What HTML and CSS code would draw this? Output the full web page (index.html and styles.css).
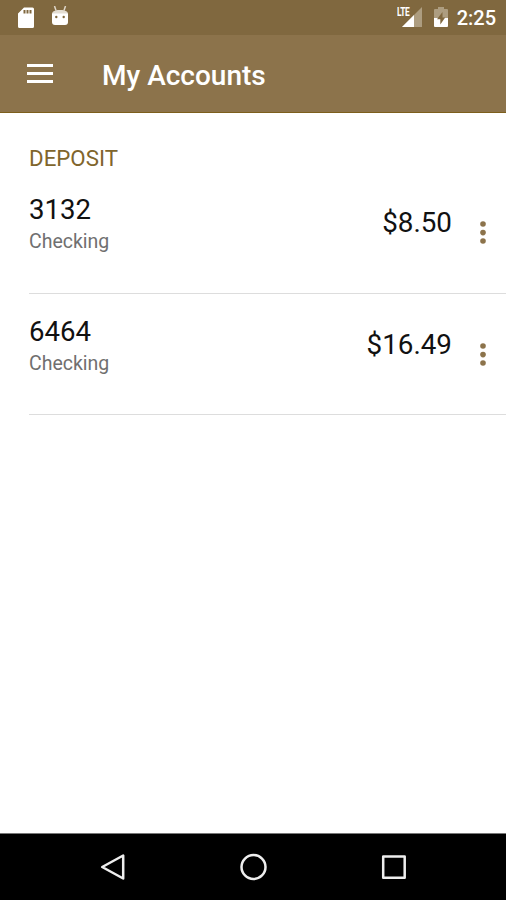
FILE: index.html
```html
<!DOCTYPE html>
<html lang="en">
<head>
	<meta charset="utf-8">
	<title>My Accounts</title>
	<link rel="stylesheet" href="styles.css">
</head>
<body>
	<div class="status-bar">
		<svg class="sd-icon" width="16" height="21" viewBox="0 0 16 21">
			<path fill="#fff" fill-rule="evenodd" d="M6 .500h8.500a1.500 1.500 0 0 1 1.500 1.500v17.500a1.500 1.500 0 0 1-1.500 1.500h-13A1.500 1.500 0 0 1 0 19.500V6.500zM5.500 3v3.500h2V3zm3 0v3.500h2V3zm3 0v3.500h2V3z"/>
		</svg>
		<svg class="android-icon" width="18" height="20" viewBox="0 0 18 20">
			<path stroke="#ded6c8" stroke-width="1.500" d="M3.500 0l1.500 4.500M14.500 0l-1.500 4.500"/>
			<path fill="#e3ddd2" d="M1 8.500C1 5.500 3 4 9 4s8 1.500 8 4.500z"/>
			<path fill="#fff" d="M1 7.500h16V16a3 3 0 0 1-3 3H4a3 3 0 0 1-3-3z"/>
			<circle cx="5.300" cy="11" r="1.200" fill="#80683f"/>
			<circle cx="12.700" cy="11" r="1.200" fill="#80683f"/>
		</svg>
		<div class="status-right">
			<div class="signal">
				<span class="lte">LTE</span>
				<svg width="20" height="20" viewBox="0 0 20 20">
					<path fill="#ad9d80" d="M20 0v20H0z"/>
					<path fill="#fff" d="M12 8v12H0z"/>
				</svg>
			</div>
			<svg class="battery-icon" width="14" height="20" viewBox="0 0 14 20">
				<path fill="#ad9d80" d="M4 0h6v2h3a1 1 0 0 1 1 1v8H0V3a1 1 0 0 1 1-1h3z"/>
				<path fill="#fff" d="M0 11h14v8a1 1 0 0 1-1 1H1a1 1 0 0 1-1-1z"/>
				<path fill="#80683f" d="M8.500 5L3 12.300h3.300V17.500L11.200 10.500H8.500z"/>
			</svg>
			<span class="clock">2:25</span>
		</div>
	</div>

	<div class="app-bar">
		<svg class="menu-icon" width="26" height="20" viewBox="0 0 26 20">
			<path fill="#fff" d="M0 0h26v3H0zM0 8h26v3H0zM0 16h26v3H0z"/>
		</svg>
		<h1>My Accounts</h1>
	</div>

	<div class="content">
		<h2>DEPOSIT</h2>
		<div class="account">
			<div class="account-info">
				<div class="account-number">3132</div>
				<div class="account-type">Checking</div>
			</div>
			<div class="balance">$8.50</div>
			<svg class="more-icon" width="6" height="24" viewBox="0 0 6 24">
				<g fill="#8c734b"><circle cx="3" cy="3" r="2.800"/><circle cx="3" cy="11.600" r="2.800"/><circle cx="3" cy="20" r="2.800"/></g>
			</svg>
		</div>
		<div class="account">
			<div class="account-info">
				<div class="account-number">6464</div>
				<div class="account-type">Checking</div>
			</div>
			<div class="balance">$16.49</div>
			<svg class="more-icon" width="6" height="24" viewBox="0 0 6 24">
				<g fill="#8c734b"><circle cx="3" cy="3" r="2.800"/><circle cx="3" cy="11.600" r="2.800"/><circle cx="3" cy="20" r="2.800"/></g>
			</svg>
		</div>
	</div>

	<div class="nav-bar">
		<svg width="28" height="28" viewBox="0 0 28 28" fill="none" stroke="#eee" stroke-width="2.500" stroke-linejoin="round">
			<path d="M24.200 2.500v23L3.200 14z"/>
		</svg>
		<svg width="28" height="28" viewBox="0 0 28 28" fill="none" stroke="#eee" stroke-width="2.500">
			<circle cx="14.500" cy="14" r="12"/>
		</svg>
		<svg width="28" height="28" viewBox="0 0 28 28" fill="none" stroke="#eee" stroke-width="2.500" stroke-linejoin="round">
			<path d="M4.200 3.600h21.500v21.200H4.200z"/>
		</svg>
	</div>
</body>
</html>
```

FILE: styles.css
```css
body {
	margin: 0;
	height: 900px;
	display: flex;
	flex-direction: column;
	background-color: #fff;
	font-family: Roboto, sans-serif;
	overflow: hidden;
}
svg {
	display: block;
	flex: none;
}
h1, h2 {
	margin: 0;
}
.status-bar {
	height: 35px;
	box-sizing: border-box;
	padding: 7px 10px 0 18px;
	display: flex;
	align-items: flex-start;
	background-color: #80683f;
	color: #fff;
}
.android-icon {
	margin-left: 17px;
	margin-top: -1px;
}
.status-right {
	margin-left: auto;
	display: flex;
}
.signal {
	position: relative;
	margin-right: 12px;
}
.lte {
	position: absolute;
	left: -5px;
	top: 0;
	font-size: 12px;
	line-height: 11px;
	font-weight: bold;
	letter-spacing: -0.5px;
	transform: scaleX(0.7);
	transform-origin: left;
}
.clock {
	margin-left: 9px;
	font-size: 20px;
	line-height: 23px;
	font-weight: 500;
}
.app-bar {
	height: 78px;
	box-sizing: border-box;
	padding-left: 27px;
	border-bottom: 1px solid #7d5f1c;
	display: flex;
	align-items: center;
	background-color: #8c734b;
}
h1 {
	margin-left: 49px;
	padding-top: 5px;
	font-size: 28px;
	line-height: 32px;
	font-weight: 500;
	color: #fff;
}
.content {
	flex: 1;
	padding: 32px 0 0 29px;
}
h2 {
	font-size: 22.3px;
	line-height: 26px;
	margin-bottom: 1px;
	font-weight: normal;
	color: #80652c;
}
.account {
	height: 121.5px;
	box-sizing: border-box;
	padding: 22px 20px 0 0;
	border-bottom: 1px solid #ddd;
	display: flex;
	align-items: flex-start;
}
.account-number {
	font-size: 27.6px;
	line-height: 32px;
	color: #111;
}
.account-type {
	font-size: 19.5px;
	line-height: 24px;
	margin-top: 4px;
	color: #707070;
}
.balance {
	margin-left: auto;
	padding-top: 13.4px;
	font-size: 27.8px;
	line-height: 32px;
	color: #111;
}
.more-icon {
	margin-left: 28px;
	margin-top: 27px;
}
.nav-bar {
	height: 67px;
	box-sizing: border-box;
	padding-bottom: 1px;
	border-top: 1px solid #777;
	display: flex;
	align-items: center;
	justify-content: center;
	gap: 112px;
	background-color: #000;
}
```
